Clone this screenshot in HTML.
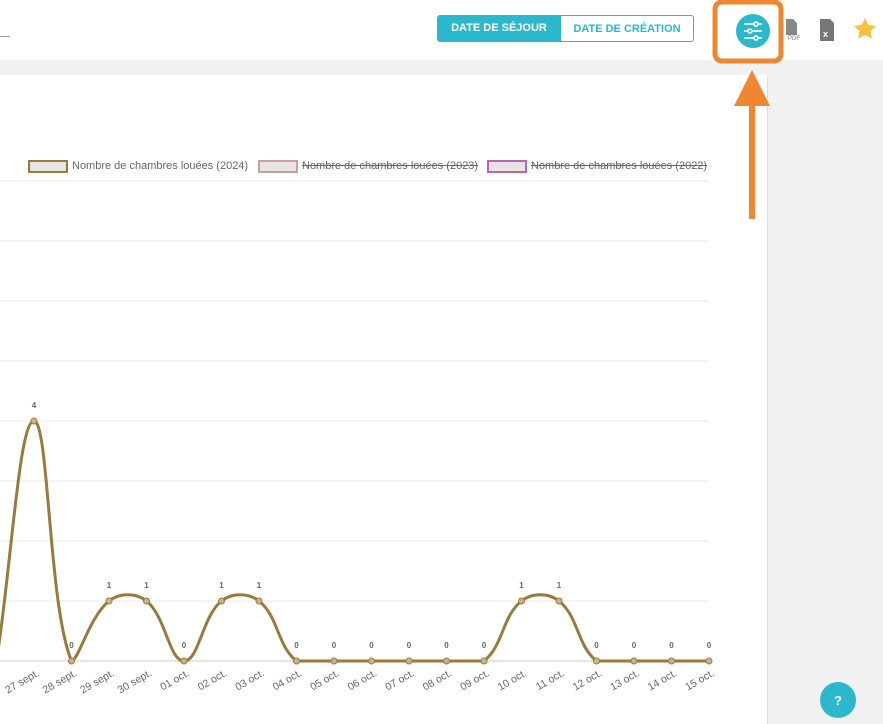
<!DOCTYPE html>
<html><head><meta charset="utf-8"><style>
body{margin:0;width:883px;height:724px;overflow:hidden;background:#f1f1f1;font-family:"Liberation Sans",sans-serif;position:relative}
.top{position:absolute;left:0;top:0;width:883px;height:60px;background:#fff}
.card{position:absolute;left:0;top:75px;width:767px;height:649px;background:#fff;border-right:1px solid #ddd}
.b1,.b2{position:absolute;top:15px;height:27px;font-size:11px;font-weight:bold;line-height:27px;text-align:center;box-sizing:border-box}
.b1{left:437px;width:124px;background:#2bb8cc;color:#fff;border-radius:3px 0 0 3px}
.b2{left:560px;width:134px;border:1px solid #2bb8cc;color:#2bb8cc;background:#fff;border-radius:0 3px 3px 0}
.leg{position:absolute;top:159px;font-size:11px;color:#666;line-height:14px;white-space:nowrap}
.sw{position:absolute;top:160px;width:36px;height:9px;background:#e8e4e4;border:2px solid}
</style></head><body>
<div class="top"></div>
<div style="position:absolute;left:0;top:36px;width:10px;height:1px;background:#999"></div>
<div class="card"></div>
<div class="b1">DATE DE SÉJOUR</div><div class="b2">DATE DE CRÉATION</div>
<div class="sw" style="left:28px;border-color:#9a7a3c"></div><div class="leg" style="left:72px">Nombre de chambres louées (2024)</div>
<div class="sw" style="left:258px;border-color:#c9a0a0"></div><div class="leg" style="left:302px;text-decoration:line-through">Nombre de chambres louées (2023)</div>
<div class="sw" style="left:487px;border-color:#c062b4"></div><div class="leg" style="left:531px;text-decoration:line-through">Nombre de chambres louées (2022)</div>
<svg id="ch" width="883" height="724" style="position:absolute;left:0;top:0"></svg>
<svg width="883" height="724" style="position:absolute;left:0;top:0">
<rect x="715" y="2" width="66" height="59" rx="7" fill="none" stroke="#f0862f" stroke-width="5"/>
<circle cx="753" cy="31" r="17" fill="#2bb8cc"/>
<g stroke="#fff" stroke-width="1.6" fill="none"><line x1="744" y1="24" x2="762" y2="24"/><line x1="744" y1="31" x2="762" y2="31"/><line x1="744" y1="38" x2="762" y2="38"/>
<circle cx="756" cy="24" r="2" fill="#2bb8cc"/><circle cx="750" cy="31" r="2" fill="#2bb8cc"/><circle cx="756" cy="38" r="2" fill="#2bb8cc"/></g>
<polygon points="752,70 770,106 734,106" fill="#f0862f"/><rect x="749" y="104" width="6" height="115" fill="#f0862f"/>
<path d="M786 19h7l4 4v12h-11z" fill="#888"/><text x="788" y="40" font-size="6" fill="#777" font-family="Liberation Sans">PDF</text>
<path d="M820 19h10l4 4v18h-14z" fill="#777"/><text x="823" y="37" font-size="9" font-weight="bold" fill="#fff" font-family="Liberation Sans">x</text>
<polygon points="865,18 868.5,25 876,26 870.5,31 872,38.5 865,35 858,38.5 859.5,31 854,26 861.5,25" fill="#f7c13c"/>
<circle cx="838" cy="700" r="18" fill="#2bb8cc"/><text x="838" y="705" font-size="13" font-weight="bold" fill="#fff" text-anchor="middle" font-family="Liberation Sans">?</text>
</svg>
<script>
var s=document.getElementById('ch'),h='';
for(var y=181;y<=661;y+=60)h+='<line x1="0" y1="'+y+'" x2="709" y2="'+y+'" stroke="'+(y==661?'#ccc':'#e8e8e8')+'"/>';
var v=[0,4,0,1,1,0,1,1,0,0,0,0,0,0,1,1,0,0,0,0];
var lab=['','27 sept.','28 sept.','29 sept.','30 sept.','01 oct.','02 oct.','03 oct.','04 oct.','05 oct.','06 oct.','07 oct.','08 oct.','09 oct.','10 oct.','11 oct.','12 oct.','13 oct.','14 oct.','15 oct.'];
var p=v.map(function(a,i){return [34+(i-1)*37.5,661-a*60]});
var cps=p.map(function(c,i){var a=p[i-1]||c,b=p[i+1]||c;var d1=Math.hypot(c[0]-a[0],c[1]-a[1]),d2=Math.hypot(b[0]-c[0],b[1]-c[1]);var s1=d1/(d1+d2)||0,s2=d2/(d1+d2)||0;var t=.4;
var r=[[c[0]-t*s1*(b[0]-a[0]),c[1]-t*s1*(b[1]-a[1])],[c[0]+t*s2*(b[0]-a[0]),c[1]+t*s2*(b[1]-a[1])]];r[0][1]=Math.min(661,r[0][1]);r[1][1]=Math.min(661,r[1][1]);return r});
var d='M'+p[0];for(var i=1;i<p.length;i++)d+=' C'+cps[i-1][1]+' '+cps[i][0]+' '+p[i];
h+='<path d="'+d+'" fill="none" stroke="#9a7a3c" stroke-width="3"/>';
for(i=1;i<p.length;i++){h+='<circle cx="'+p[i][0]+'" cy="'+p[i][1]+'" r="3" fill="#c8b48a" stroke="#9a7a3c"/>';
h+='<text x="'+p[i][0]+'" y="'+(p[i][1]-13)+'" font-size="8" font-weight="bold" fill="#666" text-anchor="middle" font-family="Liberation Sans">'+v[i]+'</text>';
h+='<text transform="translate('+(p[i][0]+6)+',675) rotate(-30)" font-size="10.5" fill="#666" text-anchor="end" font-family="Liberation Sans">'+lab[i]+'</text>';}
s.innerHTML=h;
</script>
</body></html>
